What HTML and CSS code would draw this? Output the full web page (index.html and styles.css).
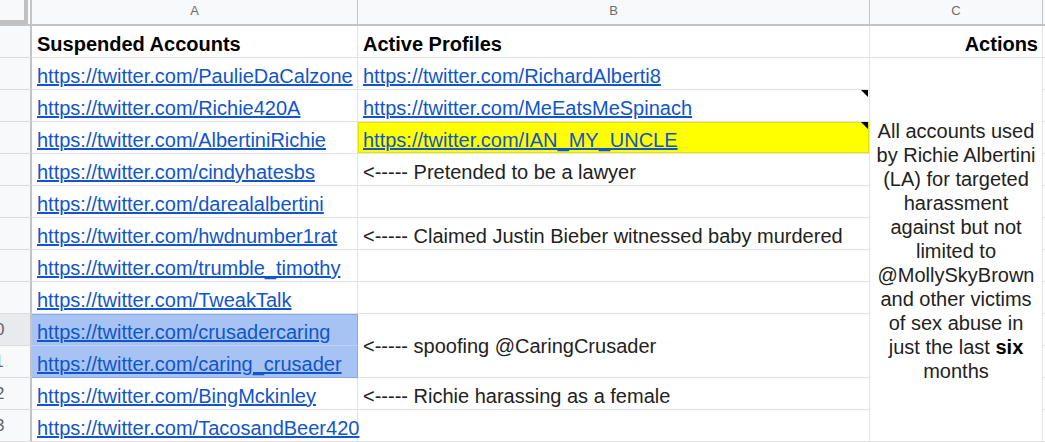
FILE: index.html
```html
<!DOCTYPE html>
<html>
<head>
<meta charset="utf-8">
<link rel="stylesheet" href="styles.css">
</head>
<body>
<div class="sheet">
  <div class="corner"><div class="corner-bars"></div></div>
  <div class="colhead ca">A</div>
  <div class="colhead cb">B</div>
  <div class="colhead cc">C</div>
  <div class="colhead cd"></div>

  <div class="rh"><span>1</span></div>
  <div class="cell ca bold">Suspended Accounts</div>
  <div class="cell cb bold">Active Profiles</div>
  <div class="cell cc bold right">Actions</div>
  <div class="cell cd"></div>

  <div class="rh"><span>2</span></div>
  <div class="cell ca"><a href="#">https://twitter.com/PaulieDaCalzone</a></div>
  <div class="cell cb"><a href="#">https://twitter.com/RichardAlberti8</a></div>
  <div class="cell cc merged-c"><div class="wrap-text">All accounts used<br>by Richie Albertini<br>(LA) for targeted<br>harassment<br>against but not<br>limited to<br>@MollySkyBrown<br>and other victims<br>of sex abuse in<br>just the last <b>six</b><br>months</div></div>
  <div class="cell cd"></div>

  <div class="rh"><span>3</span></div>
  <div class="cell ca"><a href="#">https://twitter.com/Richie420A</a></div>
  <div class="cell cb note"><a href="#">https://twitter.com/MeEatsMeSpinach</a></div>
  <div class="cell cd"></div>

  <div class="rh"><span>4</span></div>
  <div class="cell ca"><a href="#">https://twitter.com/AlbertiniRichie</a></div>
  <div class="cell cb note yellow"><a href="#">https://twitter.com/IAN_MY_UNCLE</a></div>
  <div class="cell cd"></div>

  <div class="rh"><span>5</span></div>
  <div class="cell ca"><a href="#">https://twitter.com/cindyhatesbs</a></div>
  <div class="cell cb">&lt;----- Pretended to be a lawyer</div>
  <div class="cell cd"></div>

  <div class="rh"><span>6</span></div>
  <div class="cell ca"><a href="#">https://twitter.com/darealalbertini</a></div>
  <div class="cell cb"></div>
  <div class="cell cd"></div>

  <div class="rh"><span>7</span></div>
  <div class="cell ca"><a href="#">https://twitter.com/hwdnumber1rat</a></div>
  <div class="cell cb">&lt;----- Claimed Justin Bieber witnessed baby murdered</div>
  <div class="cell cd"></div>

  <div class="rh"><span>8</span></div>
  <div class="cell ca"><a href="#">https://twitter.com/trumble_timothy</a></div>
  <div class="cell cb"></div>
  <div class="cell cd"></div>

  <div class="rh"><span>9</span></div>
  <div class="cell ca"><a href="#">https://twitter.com/TweakTalk</a></div>
  <div class="cell cb"></div>
  <div class="cell cd"></div>

  <div class="rh rh-sel"><span>10</span></div>
  <div class="cell ca sel sel-top"><a href="#">https://twitter.com/crusadercaring</a></div>
  <div class="cell cb merged-b">&lt;----- spoofing @CaringCrusader</div>
  <div class="cell cd"></div>

  <div class="rh"><span>11</span></div>
  <div class="cell ca sel sel-bottom"><a href="#">https://twitter.com/caring_crusader</a></div>
  <div class="cell cd"></div>

  <div class="rh"><span>12</span></div>
  <div class="cell ca"><a href="#">https://twitter.com/BingMckinley</a></div>
  <div class="cell cb">&lt;----- Richie harassing as a female</div>
  <div class="cell cd"></div>

  <div class="rh"><span>13</span></div>
  <div class="cell ca"><a href="#">https://twitter.com/TacosandBeer420</a></div>
  <div class="cell cb"></div>
  <div class="cell cd"></div>
</div>
</body>
</html>
```
FILE: styles.css
```css
* { box-sizing: border-box; }

html, body {
  margin: 0;
  padding: 0;
  background: #ffffff;
  overflow: hidden;
}

.sheet {
  display: grid;
  grid-template-columns: 32px 326px 512px 173px 1fr;
  grid-template-rows: 26px repeat(13, 32px);
  width: 1045px;
  height: 442px;
  font-family: "Liberation Sans", Arial, sans-serif;
  font-size: 20px;
  color: #222222;
}

.ca { grid-column: 2; }
.cb { grid-column: 3; }
.cc { grid-column: 4; }
.cd { grid-column: 5; }
.rh, .corner { grid-column: 1; }

.corner {
  background: #f8f9fa;
  border-right: 2px solid #c4c4c4;
  border-bottom: 2px solid #c4c4c4;
}

.corner-bars {
  width: 28px;
  height: 24px;
  border-right: 4px solid #c0c0c0;
  border-bottom: 4px solid #c0c0c0;
}

.colhead {
  background: #f8f9fa;
  border-right: 1px solid #c4c4c4;
  border-bottom: 2px solid #c4c4c4;
  color: #6b6b6b;
  font-size: 13px;
  line-height: 15px;
  text-align: center;
  padding-top: 3px;
}

.rh {
  background: #f8f9fa;
  border-right: 2px solid #c4c4c4;
  border-bottom: 1px solid #dcdcdc;
  display: flex;
  justify-content: flex-end;
  align-items: center;
  overflow: hidden;
  color: #5f6368;
  font-size: 17px;
}

.rh span {
  flex: 0 0 70px;
  text-align: center;
}

.rh-sel { background: #e8eaed; }

.cell {
  border-right: 1px solid #e2e2e2;
  border-bottom: 1px solid #e2e2e2;
  padding: 0 4px 1px 5px;
  display: flex;
  align-items: flex-end;
  white-space: nowrap;
  line-height: 23px;
  position: relative;
}

.bold { font-weight: bold; color: #000000; }
.right { justify-content: flex-end; }

.cell a {
  color: #1155cc;
  text-decoration: underline;
}

.yellow {
  background: #ffff00;
  box-shadow: inset 0 0 0 1px #e3e300;
}

.note::after {
  content: "";
  position: absolute;
  top: 0;
  right: 1px;
  width: 0;
  height: 0;
  border-top: 7px solid #000000;
  border-left: 7px solid transparent;
}

.merged-c {
  grid-row: span 12;
  justify-content: center;
  align-items: center;
  padding: 0 1px;
}

.wrap-text {
  text-align: center;
  line-height: 24px;
  color: #222222;
  padding-top: 2px;
}

.wrap-text b { color: #000000; }

.merged-b {
  grid-row: span 2;
  align-items: center;
  padding-bottom: 0;
  padding-top: 2px;
}

.sel {
  background: #a6c3f3;
  border-right-color: #86a8e6;
}

.sel-top {
  border-bottom-color: #bcd0f3;
  box-shadow: inset 0 1px 0 #86a8e6;
}

.sel-bottom {
  border-bottom-color: #86a8e6;
}
```
